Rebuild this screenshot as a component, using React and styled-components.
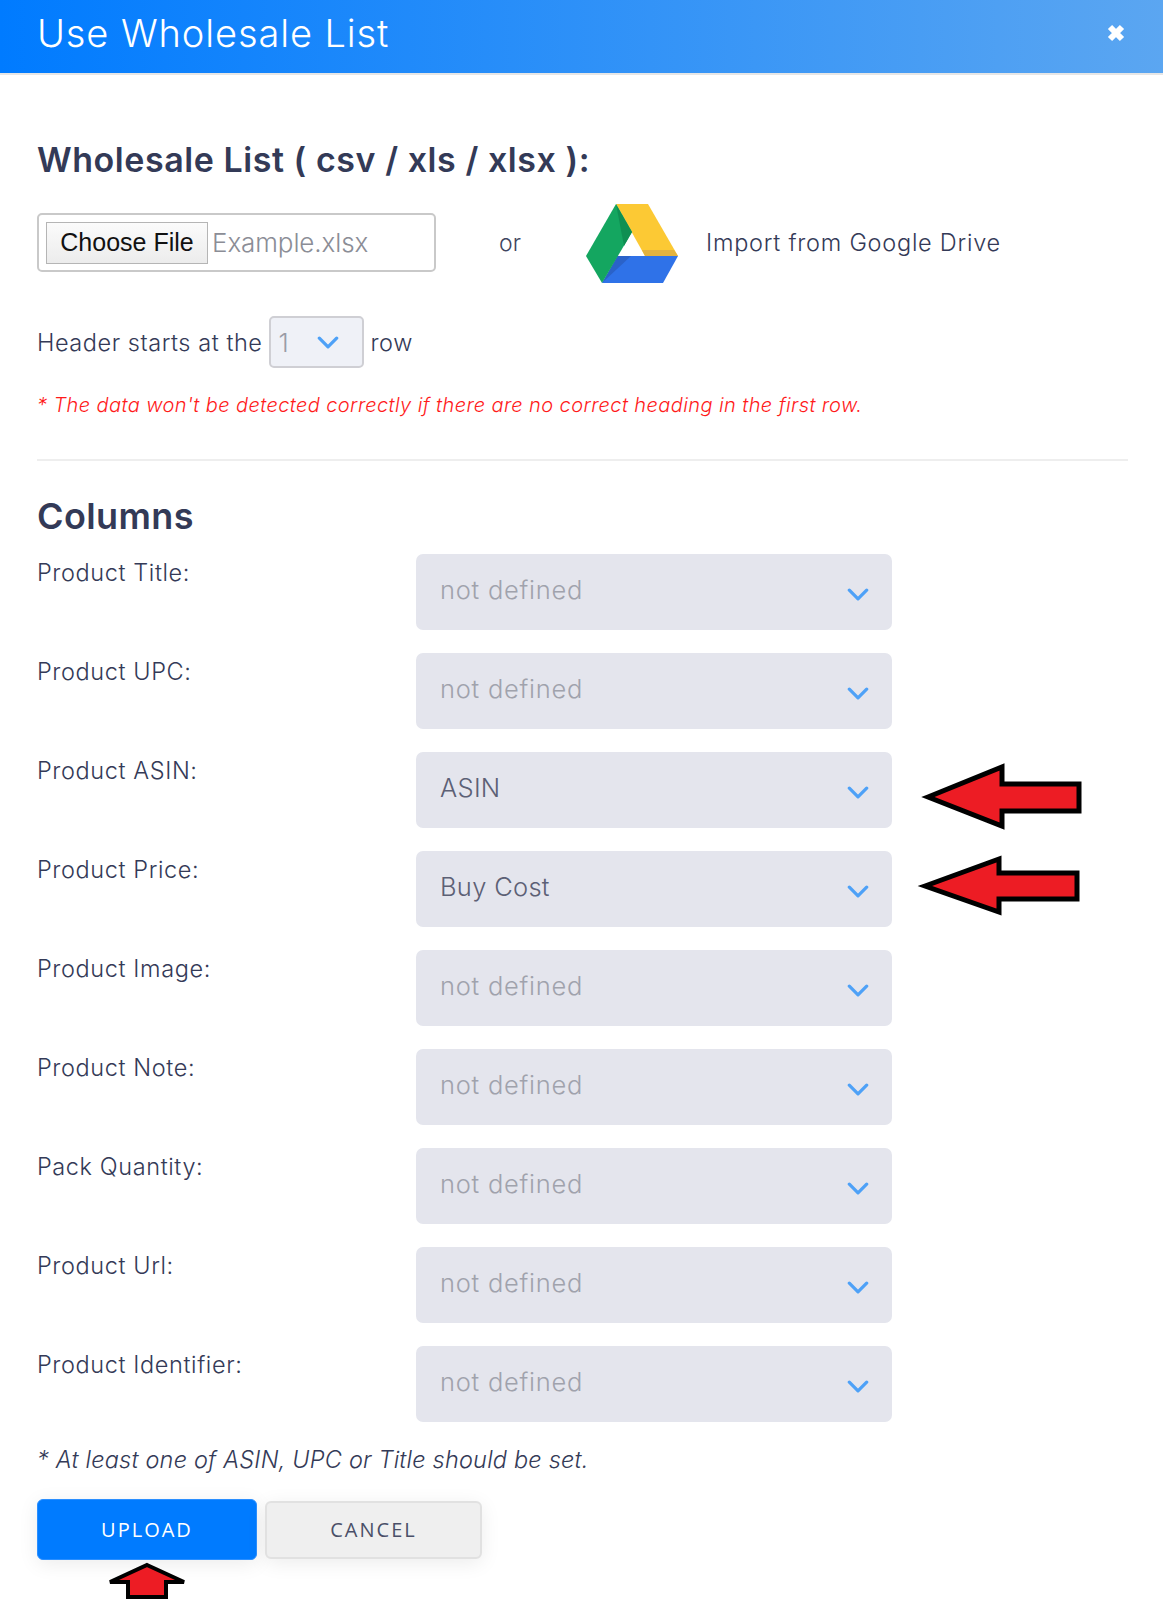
import React from "react";
import styled, { createGlobalStyle } from "styled-components";

const Global = createGlobalStyle`
  html, body { margin: 0; padding: 0; background: #fff; }
  body { font-family: "Inter", "Noto Sans", sans-serif; color: #3a3f5c; }
  #root { height: 1600px; overflow: hidden; position: relative; }
`;

const Page = styled.div`
  position: relative;
  width: 1163px;
  height: 1600px;
  overflow: hidden;
`;
const Header = styled.header`
  box-sizing: content-box;
  height: 66px;
  border-bottom: 2px solid #e6e6e6;
  background: linear-gradient(90deg, #007bff 0%, #5ba6f1 100%);
  display: flex;
  align-items: center;
  justify-content: space-between;
  padding: 0 35px 7px 37px;
  color: #fff;
`;
const Title = styled.h1`
  margin: 0;
  font-size: 38px;
  font-weight: 300;
  letter-spacing: 0.9px;
`;
const Close = styled.svg`
  width: 24px;
  height: 24px;
`;
const Body = styled.main`
  padding: 65px 35px 0 37px;
`;
const Heading = styled.h2`
  margin: 0;
  height: 40px;
  line-height: 40px;
  font-size: ${(p) => p.$size}px;
  font-weight: 600;
  color: #333a57;
  letter-spacing: ${(p) => p.$spacing}px;
`;
const FileRow = styled.div`
  margin-top: 33px;
  height: 59px;
  display: flex;
  align-items: center;
  font-size: 22px;
  font-weight: 300;
`;
const FileBox = styled.div`
  box-sizing: border-box;
  width: 399px;
  height: 59px;
  border: 2px solid #c9c9c9;
  border-radius: 5px;
  display: flex;
  align-items: center;
  padding-left: 7px;
  gap: 4px;
`;
const ChooseButton = styled.button`
  box-sizing: border-box;
  width: 162px;
  height: 42px;
  padding: 0;
  border: 1px solid #b5b5b5;
  background: linear-gradient(#fbfbfb, #ececec);
  font-family: "Liberation Sans", Arial, sans-serif;
  font-size: 25px;
  color: #111;
`;
const FileName = styled.span`
  font-size: 26px;
  font-weight: 300;
  color: #8b8d96;
  letter-spacing: -0.1px;
`;
const Or = styled.span`
  margin-left: 63px;
  width: 87px;
  font-size: 23px;
  color: #3f4560;
`;
const DriveLogo = styled.svg`
  width: 92px;
  height: 80px;
  margin-top: 3px;
`;
const DriveText = styled.span`
  margin-left: 28px;
  font-size: 23.5px;
  font-weight: 300;
  color: #343a57;
  letter-spacing: 0.75px;
`;
const HeaderRow = styled.div`
  margin-top: 44px;
  height: 52px;
  display: flex;
  align-items: center;
  font-size: 23.5px;
  font-weight: 300;
  letter-spacing: 0.55px;
  color: #343a57;
`;
const MiniSelect = styled.div`
  box-sizing: border-box;
  width: 95px;
  height: 52px;
  margin: 0 7px 0 6px;
  border: 2px solid #cfcfd4;
  border-radius: 5px;
  background: #eff1f7;
  display: flex;
  align-items: center;
  justify-content: space-between;
  padding: 0 23px 0 8px;
  color: #9a9ca6;
  font-size: 26px;
`;
const RedNote = styled.p`
  margin: 25px 0 0;
  height: 24px;
  line-height: 24px;
  font-size: 20px;
  font-style: italic;
  font-weight: 300;
  letter-spacing: 0.41px;
  color: #ff1a1a;
`;
const Divider = styled.hr`
  margin: 42px 0 0;
  border: 0;
  height: 2px;
  background: #eeeeee;
`;
const SubHeading = styled(Heading)`
  margin-top: 35px;
`;
const Rows = styled.div`
  margin-top: 18px;
  display: flex;
  flex-direction: column;
  gap: 23px;
`;
const Row = styled.div`
  display: grid;
  grid-template-columns: 379px 476px;
`;
const Label = styled.label`
  padding-top: 4px;
  line-height: 30px;
  font-size: 23.5px;
  font-weight: 300;
  letter-spacing: 0.6px;
  color: #343a57;
`;
const SelectBox = styled.div`
  box-sizing: border-box;
  height: 76px;
  border-radius: 7px;
  background: #e4e5ed;
  display: flex;
  align-items: center;
  justify-content: space-between;
  padding: 0 23px 6px 24px;
  font-size: 25.5px;
  font-weight: 300;
  letter-spacing: ${(p) => (p.$muted ? "0.75px" : "0.3px")};
  color: ${(p) => (p.$muted ? "#a0a2ac" : "#5c6075")};
`;
const Chevron = styled.svg`
  width: ${(p) => p.$w}px;
  height: ${(p) => Math.round(p.$w * 0.6)}px;
  margin-top: ${(p) => p.$dy}px;
`;
const Hint = styled.p`
  margin: 24px 0 0;
  height: 28px;
  line-height: 28px;
  font-size: 23.5px;
  font-style: italic;
  font-weight: 300;
  letter-spacing: 0.2px;
  color: #343a57;
`;
const Actions = styled.div`
  margin-top: 25px;
  display: flex;
  align-items: center;
  gap: 8px;
`;
const Button = styled.button`
  box-sizing: border-box;
  font-family: "Open Sans", sans-serif;
  font-size: 20px;
  letter-spacing: 2px;
  border-radius: 6px;
  box-shadow: 0 4px 20px rgba(0, 0, 0, 0.08);
`;
const Primary = styled(Button)`
  width: 220px;
  height: 61px;
  border: 1px solid #2b8fff;
  background: #007bff;
  color: #fff;
`;
const Secondary = styled(Button)`
  width: 217px;
  height: 58px;
  border: 2px solid #e1e1e1;
  background: #efefef;
  color: #4a4f68;
`;
const Arrow = styled.svg`
  position: absolute;
  left: 0;
  top: 0;
  pointer-events: none;
`;

const Down = ({ w = 22, dy = 10 }) => (
  <Chevron $w={w} $dy={dy} viewBox="0 0 20 12" fill="none">
    <path d="M2 2l8 8 8-8" stroke="#4ea1f7" strokeWidth="3" strokeLinecap="round" strokeLinejoin="round" />
  </Chevron>
);

const rows = [
  ["Product Title:", "not defined"],
  ["Product UPC:", "not defined"],
  ["Product ASIN:", "ASIN"],
  ["Product Price:", "Buy Cost"],
  ["Product Image:", "not defined"],
  ["Product Note:", "not defined"],
  ["Pack Quantity:", "not defined"],
  ["Product Url:", "not defined"],
  ["Product Identifier:", "not defined"],
];

export default function App() {
  return (
    <Page>
      <Global />
      <Header>
        <Title>Use Wholesale List</Title>
        <Close viewBox="0 0 24 24" fill="none">
          <path d="M6 6l12 12M18 6L6 18" stroke="#fff" strokeWidth="6" />
        </Close>
      </Header>
      <Body>
        <Heading $size={34} $spacing={0.55}>Wholesale List ( csv / xls / xlsx ):</Heading>
        <FileRow>
          <FileBox>
            <ChooseButton type="button">Choose File</ChooseButton>
            <FileName>Example.xlsx</FileName>
          </FileBox>
          <Or>or</Or>
          <DriveLogo viewBox="0 0 92 80">
            <polygon points="30,0 62,0 92,52 59,52" fill="#fcc934" />
            <polygon points="59,52 92,52 88,46 56,46" fill="#e2b23f" />
            <polygon points="31.5,52 92,52 77,79 16,79" fill="#2f72e8" />
            <polygon points="31.5,52 45,52 16,79" fill="#2a62c9" />
            <polygon points="30,0 46,28 16,79 0,52" fill="#14a660" />
            <polygon points="30,0 46,28 38,42" fill="#0f8f52" />
          </DriveLogo>
          <DriveText>Import from Google Drive</DriveText>
        </FileRow>
        <HeaderRow>
          Header starts at the
          <MiniSelect>
            1
            <Down w={22} dy={0} />
          </MiniSelect>
          row
        </HeaderRow>
        <RedNote>* The data won't be detected correctly if there are no correct heading in the first row.</RedNote>
        <Divider />
        <SubHeading $size={36} $spacing={0.4}>Columns</SubHeading>
        <Rows>
          {rows.map(([label, value]) => (
            <Row key={label}>
              <Label>{label}</Label>
              <SelectBox $muted={value === "not defined"}>
                {value}
                <Down />
              </SelectBox>
            </Row>
          ))}
        </Rows>
        <Hint>* At least one of ASIN, UPC or Title should be set.</Hint>
        <Actions>
          <Primary type="button">UPLOAD</Primary>
          <Secondary type="button">CANCEL</Secondary>
        </Actions>
      </Body>
      <Arrow width="1163" height="1600" viewBox="0 0 1163 1600">
        <g fill="#ed1c24" stroke="#000" strokeWidth="5" strokeLinejoin="miter">
          <polygon points="928,797 1002,767 1002,784 1079,784 1079,811 1002,811 1002,826" />
          <polygon points="925,886 999,859 999,873 1077,873 1077,899 999,899 999,912" />
          <polygon points="147,1565 184,1582 166,1582 166,1597 128,1597 128,1582 110,1582" strokeWidth="4" />
        </g>
      </Arrow>
    </Page>
  );
}
